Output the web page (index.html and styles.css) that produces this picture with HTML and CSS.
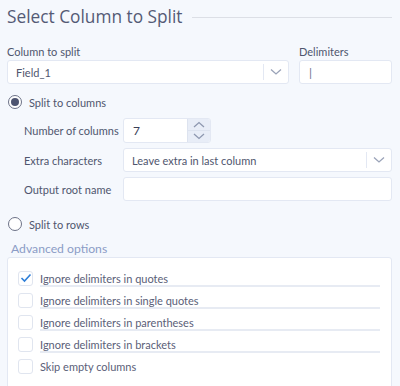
FILE: index.html
```html
<!DOCTYPE html>
<html lang="en">
<head>
    <meta charset="UTF-8">
    <title>Select Column to Split</title>
    <link rel="stylesheet" href="styles.css">
</head>
<body>
    <div class="panel">
        <div class="title-row">
            <h1>Select Column to Split</h1>
            <div class="title-line"></div>
        </div>

        <div class="top-row">
            <div class="field grow">
                <label>Column to split</label>
                <div class="select">
                    <span class="select-value">Field_1</span>
                    <span class="select-arrow">
                        <svg width="12" height="8" viewBox="0 0 12 8"><path d="M1 1.5 L6 6 L11 1.5" fill="none" stroke="#9aa3b8" stroke-width="1.3"/></svg>
                    </span>
                </div>
            </div>
            <div class="field delim">
                <label>Delimiters</label>
                <div class="input"><span class="caret-text">|</span></div>
            </div>
        </div>

        <div class="radio-row">
            <span class="radio checked"></span>
            <span>Split to columns</span>
        </div>

        <div class="sub-options">
            <div class="opt-row">
                <span class="opt-label">Number of columns</span>
                <div class="number">
                    <span class="number-value">7</span>
                    <div class="spinner">
                        <span class="spin-btn"><svg width="12" height="7" viewBox="0 0 12 7"><path d="M1 6 L6 1.5 L11 6" fill="none" stroke="#8e98b0" stroke-width="1.3"/></svg></span>
                        <span class="spin-btn"><svg width="12" height="7" viewBox="0 0 12 7"><path d="M1 1 L6 5.5 L11 1" fill="none" stroke="#8e98b0" stroke-width="1.3"/></svg></span>
                    </div>
                </div>
            </div>
            <div class="opt-row">
                <span class="opt-label">Extra characters</span>
                <div class="select wide">
                    <span class="select-value">Leave extra in last column</span>
                    <span class="select-arrow">
                        <svg width="12" height="8" viewBox="0 0 12 8"><path d="M1 1.5 L6 6 L11 1.5" fill="none" stroke="#9aa3b8" stroke-width="1.3"/></svg>
                    </span>
                </div>
            </div>
            <div class="opt-row">
                <span class="opt-label">Output root name</span>
                <div class="input wide"></div>
            </div>
        </div>

        <div class="radio-row rows">
            <span class="radio"></span>
            <span>Split to rows</span>
        </div>

        <div class="adv-title">Advanced options</div>
        <div class="adv-box">
            <div class="check-row">
                <span class="check">
                    <svg width="12" height="10" viewBox="0 0 12 10"><path d="M1.5 5 L4.5 8 L10.5 1.5" fill="none" stroke="#2f7fd8" stroke-width="1.6"/></svg>
                </span>
                <span class="check-label lined">Ignore delimiters in quotes</span>
            </div>
            <div class="check-row">
                <span class="check"></span>
                <span class="check-label lined">Ignore delimiters in single quotes</span>
            </div>
            <div class="check-row">
                <span class="check"></span>
                <span class="check-label lined">Ignore delimiters in parentheses</span>
            </div>
            <div class="check-row">
                <span class="check"></span>
                <span class="check-label lined">Ignore delimiters in brackets</span>
            </div>
            <div class="check-row">
                <span class="check"></span>
                <span class="check-label">Skip empty columns</span>
            </div>
        </div>
    </div>
</body>
</html>
```

FILE: styles.css
```css
body {
    margin: 0;
    background-color: #f5f8fd;
    font-family: Lato, "Open Sans", sans-serif;
    font-size: 11px;
    color: #4f566e;
    overflow: hidden;
}
.panel {
    padding: 4px 8px 0 7px;
}
.title-row {
    display: flex;
    align-items: center;
    gap: 10px;
    height: 24px;
}
h1 {
    margin: 0;
    font-family: "Open Sans", sans-serif;
    font-size: 17.3px;
    font-weight: 400;
    color: #545a75;
    white-space: nowrap;
}
.title-line {
    flex: 1;
    height: 1px;
    background: #dcdfe6;
    margin-top: 2px;
}
.top-row {
    display: flex;
    gap: 10px;
    margin-top: 16px;
}
.field label {
    display: block;
    height: 16px;
    line-height: 16px;
}
.grow {
    flex: 1;
}
.delim {
    width: 93px;
}
.select,
.input,
.number {
    box-sizing: border-box;
    height: 24px;
    background: #ffffff;
    border: 1px solid #e3e8f3;
    border-radius: 3px;
    display: flex;
    align-items: center;
}
.select-value {
    flex: 1;
    padding-left: 8px;
    color: #4f566e;
}
.select-arrow {
    display: flex;
    align-items: center;
    justify-content: center;
    width: 24px;
    height: 16px;
    border-left: 1px solid #e3e8f3;
}
.caret-text {
    padding-left: 9px;
    color: #6a7290;
    font-size: 12px;
}
.radio-row {
    display: flex;
    align-items: center;
    gap: 7px;
    margin-top: 10px;
    height: 16px;
    padding-left: 1px;
}
.radio {
    box-sizing: border-box;
    width: 14px;
    height: 14px;
    border: 1px solid #6c7287;
    border-radius: 50%;
    background: #ffffff;
    position: relative;
}
.radio.checked::after {
    content: "";
    position: absolute;
    left: 2px;
    top: 2px;
    width: 8px;
    height: 8px;
    border-radius: 50%;
    background: #4d5470;
}
.sub-options {
    padding-left: 17px;
    margin-top: 8px;
    display: flex;
    flex-direction: column;
    gap: 5px;
}
.opt-row {
    display: flex;
    align-items: center;
}
.opt-label {
    width: 99px;
    white-space: nowrap;
}
.number {
    width: 88px;
    height: 25px;
    overflow: hidden;
}
.number-value {
    flex: 1;
    padding-left: 9px;
    color: #3a4058;
    font-size: 12px;
}
.spinner {
    width: 22px;
    height: 100%;
    display: flex;
    flex-direction: column;
    background: #e8edf7;
    border-left: 1px solid #dde3ef;
}
.spin-btn {
    flex: 1;
    display: flex;
    align-items: center;
    justify-content: center;
}
.spin-btn + .spin-btn {
    border-top: 1px solid #dde3ef;
}
.wide {
    flex: 1;
}
.rows {
    margin-top: 15px;
}
.adv-title {
    margin-top: 9px;
    margin-left: 4px;
    font-size: 12.2px;
    color: #8b9cc6;
    height: 16px;
    line-height: 16px;
}
.adv-box {
    background: #ffffff;
    border: 1px solid #e3e8f3;
    border-radius: 3px;
    padding: 9px 10px 20px 10px;
    display: flex;
    flex-direction: column;
}
.check-row {
    display: flex;
    align-items: center;
    gap: 7px;
    height: 22px;
}
.check {
    box-sizing: border-box;
    width: 15px;
    height: 15px;
    border: 1px solid #e0e5ef;
    border-radius: 3px;
    display: flex;
    align-items: center;
    justify-content: center;
    flex-shrink: 0;
}
.check-label {
    flex: 1;
    line-height: 13px;
    color: #5a6078;
}
.lined {
    border-bottom: 2px solid #e7ebf3;
    margin-right: 1px;
    padding-top: 2px;
}
```
